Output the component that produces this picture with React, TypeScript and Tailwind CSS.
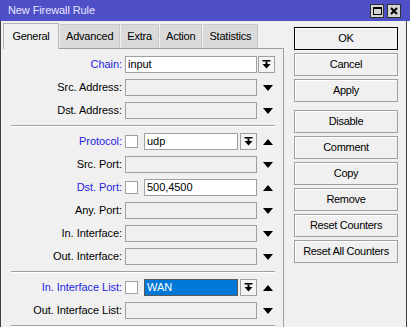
import React from "react";

type Kind = "text" | "empty" | "check" | "checkcombo";

interface Row {
  label: string;
  blue?: boolean;
  kind: Kind;
  value?: string;
  selected?: boolean;
  arrow: "down" | "up" | "combo";
}

const top: Row[] = [
  { label: "Chain:", blue: true, kind: "text", value: "input", arrow: "combo" },
  { label: "Src. Address:", kind: "empty", arrow: "down" },
  { label: "Dst. Address:", kind: "empty", arrow: "down" },
];

const mid: Row[] = [
  { label: "Protocol:", blue: true, kind: "checkcombo", value: "udp", arrow: "up" },
  { label: "Src. Port:", kind: "empty", arrow: "down" },
  { label: "Dst. Port:", blue: true, kind: "check", value: "500,4500", arrow: "up" },
  { label: "Any. Port:", kind: "empty", arrow: "down" },
  { label: "In. Interface:", kind: "empty", arrow: "down" },
  { label: "Out. Interface:", kind: "empty", arrow: "down" },
];

const bottom: Row[] = [
  { label: "In. Interface List:", blue: true, kind: "checkcombo", value: "WAN", selected: true, arrow: "up" },
  { label: "Out. Interface List:", kind: "empty", arrow: "down" },
];

const buttons = [
  ["OK", "Cancel", "Apply"],
  ["Disable", "Comment", "Copy", "Remove", "Reset Counters", "Reset All Counters"],
];

function ComboIcon() {
  return (
    <svg width="9" height="9" viewBox="0 0 9 9">
      <rect x="0.5" y="0" width="8" height="1.5" fill="#000" />
      <rect x="3.5" y="1.5" width="2" height="2.5" fill="#000" />
      <polygon points="0.5,4 8.5,4 4.5,8.5" fill="#000" />
    </svg>
  );
}

function ComboButton() {
  return (
    <div className="w-[17px] h-[17px] border border-[#a0a0a0] bg-[#f4f4f4] flex items-center justify-center">
      <ComboIcon />
    </div>
  );
}

function Triangle({ up }: { up?: boolean }) {
  return (
    <svg width="10" height="6" viewBox="0 0 10 6">
      <polygon points={up ? "0,6 10,6 5,0" : "0,0 10,0 5,6"} fill="#000" />
    </svg>
  );
}

function Check() {
  return <div className="w-[13px] h-[13px] border border-[#a0a0a0] bg-white shrink-0" />;
}

function Field({ row }: { row: Row }) {
  if (row.kind === "empty") {
    return <div className="w-[132px] h-[17px] border border-[#a0a0a0] bg-[#f0f0f0]" />;
  }
  if (row.kind === "text") {
    return (
      <div className="w-[132px] h-[17px] border border-[#a0a0a0] bg-white pl-[2px] flex items-center">
        {row.value}
      </div>
    );
  }
  if (row.kind === "check") {
    return (
      <div className="w-[132px] h-[17px] flex items-center">
        <Check />
        <div className="ml-[6px] w-[113px] h-[17px] border border-[#a0a0a0] bg-white pl-[2px] flex items-center">
          {row.value}
        </div>
      </div>
    );
  }
  return (
    <div className="w-[132px] h-[17px] flex items-center">
      <Check />
      <div
        className={
          row.selected
            ? "ml-[6px] w-[95px] h-[17px] border border-[#5a5a5a] bg-[#0078d7] text-white pl-[2px] flex items-center"
            : "ml-[6px] w-[95px] h-[17px] border border-[#a0a0a0] bg-white pl-[2px] flex items-center"
        }
      >
        {row.value}
      </div>
      <div className="ml-[2px]">
        <ComboButton />
      </div>
    </div>
  );
}

function FormRow({ row }: { row: Row }) {
  return (
    <div className="flex items-center h-[17px] tracking-[-0.05px]">
      <div
        className={
          row.blue
            ? "w-[119px] text-right text-[#1f1fe0]"
            : "w-[119px] text-right text-black"
        }
      >
        {row.label}
      </div>
      <div className="ml-[3px]">
        <Field row={row} />
      </div>
      <div className="ml-[1px] w-[17px] h-[17px] flex items-center justify-center">
        {row.arrow === "combo" ? (
          <ComboButton />
        ) : (
          <div className="ml-[2px]">
            <Triangle up={row.arrow === "up"} />
          </div>
        )}
      </div>
    </div>
  );
}

function Separator() {
  return (
    <div className="ml-[8px] w-[264px] my-[6px]">
      <div className="h-px bg-[#a0a0a0]" />
      <div className="h-px bg-white" />
    </div>
  );
}

function Group({ rows }: { rows: Row[] }) {
  return (
    <div className="flex flex-col gap-[6px]">
      {rows.map((r) => (
        <FormRow key={r.label} row={r} />
      ))}
    </div>
  );
}

const tabs = ["General", "Advanced", "Extra", "Action", "Statistics"];

export default function App() {
  return (
    <div className="w-[410px] h-[327px] overflow-hidden bg-white font-['Liberation_Sans',Arial,sans-serif] text-[11px] tracking-[-0.3px] text-black">
      {/* Title bar */}
      <div className="h-[21px] bg-[#4f4fc8] flex items-center pl-[8px] pr-[9px]">
        <span className="text-[#e8e8ff] flex-1 tracking-[-0.1px]">New Firewall Rule</span>
        <div className="flex gap-[3px]">
          <div className="w-[14px] h-[14px] bg-[#d4d4d4] border border-[#303030] flex items-center justify-center">
            <div className="w-[9px] h-[8px] border border-black border-t-2" />
          </div>
          <div className="w-[14px] h-[14px] bg-[#d4d4d4] border border-[#303030] flex items-center justify-center">
            <svg width="8" height="8" viewBox="0 0 8 8">
              <path d="M1 1 L7 7 M7 1 L1 7" stroke="#000" strokeWidth="2" />
            </svg>
          </div>
        </div>
      </div>

      <div className="flex h-[306px]">
        <div className="w-[407px] bg-[#f0f0f0] border-l border-r border-[#404040] flex">
          {/* Left: tabs + panel */}
          <div className="w-[283px] pl-[2px] pt-[2px] flex flex-col">
            <div className="flex items-end h-[26px]">
              {tabs.map((t, i) =>
                i === 0 ? (
                  <div
                    key={t}
                    className="h-[26px] w-[56px] border-l border-t border-r border-[#b4b4b4] bg-[#f0f0f0] flex items-center justify-center -mb-px relative"
                  >
                    {t}
                  </div>
                ) : (
                  <div
                    key={t}
                    className="h-[24px] px-[6px] ml-px border-t border-r border-[#c8c8c8] bg-[#dadada] flex items-center justify-center tracking-[-0.2px]"
                  >
                    {t}
                  </div>
                )
              )}
              <div className="flex-1 h-px" />
            </div>
            <div className="flex-1 border-t border-r border-[#a0a0a0] pt-[7px]">
              <Group rows={top} />
              <Separator />
              <Group rows={mid} />
              <Separator />
              <Group rows={bottom} />
              <Separator />
            </div>
          </div>

          {/* Right: buttons */}
          <div className="flex-1 pl-[10px] pt-[6px] flex flex-col">
            {buttons.map((grp, gi) => (
              <div key={gi} className={gi === 1 ? "flex flex-col gap-[3px] mt-[8px]" : "flex flex-col gap-[3px]"}>
                {grp.map((b) => (
                  <div
                    key={b}
                    className={
                      b === "OK"
                        ? "w-[104px] h-[23px] border border-black bg-[#f0f0f0] shadow-[inset_1px_1px_0_#fff] flex items-center justify-center"
                        : "w-[104px] h-[23px] border border-[#a0a0a0] bg-[#f0f0f0] shadow-[inset_1px_1px_0_#fff] flex items-center justify-center"
                    }
                  >
                    {b}
                  </div>
                ))}
              </div>
            ))}
          </div>
        </div>
        <div className="flex-1 bg-white" />
      </div>
    </div>
  );
}
